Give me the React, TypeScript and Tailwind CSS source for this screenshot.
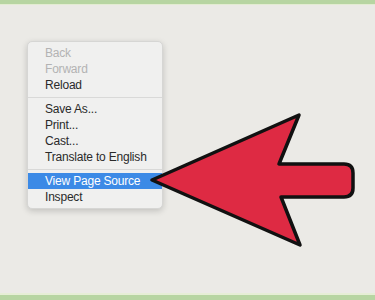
const items: { label: string; disabled?: boolean; active?: boolean; sep?: boolean }[] = [
  { label: "Back", disabled: true },
  { label: "Forward", disabled: true },
  { label: "Reload" },
  { label: "", sep: true },
  { label: "Save As..." },
  { label: "Print..." },
  { label: "Cast..." },
  { label: "Translate to English" },
  { label: "", sep: true },
  { label: "View Page Source", active: true },
  { label: "Inspect" },
];

function Arrow() {
  return (
    <svg
      className="pointer-events-none absolute left-0 top-0"
      width="375"
      height="300"
      viewBox="0 0 375 300"
    >
      <path
        d="M152 180 L299 115 L279 164 L344 164 Q353 164 353 173 L353 188 Q353 197 344 197 L281 197 L300 245 Z"
        fill="#de2a43"
        stroke="#111"
        strokeWidth="3.5"
        strokeLinejoin="round"
      />
    </svg>
  );
}

export default function App() {
  return (
    <div className="relative flex h-[300px] w-[375px] flex-col overflow-hidden bg-[#ebeae6] font-['Liberation_Sans',Arial,sans-serif]">
      <div className="h-[4px] bg-[#b7d5a2]" />
      <div className="h-[1px] bg-[#e3ecd2]" />
      <div className="flex-1 pl-[27px] pt-[36px]">
        <div className="w-[136px] rounded-[5px] border border-[#d6d6d4] bg-[#f0f0ef] py-[3px] shadow-[0_2px_6px_rgba(0,0,0,0.18)]">
          {items.map((it, i) =>
            it.sep ? (
              <div key={i} className="flex h-[8px] items-center">
                <div className="h-px w-full bg-[#d9d9d8]" />
              </div>
            ) : (
              <div
                key={i}
                className={`h-[16px] pl-[17px] text-[12px] leading-[16px] tracking-[-0.2px] ${
                  it.active
                    ? "bg-[#3c8ae6] text-white"
                    : it.disabled
                      ? "text-[#b3b3b3]"
                      : "text-[#2a2a2a]"
                }`}
              >
                {it.label}
              </div>
            ),
          )}
        </div>
      </div>
      <div className="h-[2px] bg-[#e6eed6]" />
      <div className="h-[5px] bg-[#b7d5a2]" />
      <Arrow />
    </div>
  );
}
